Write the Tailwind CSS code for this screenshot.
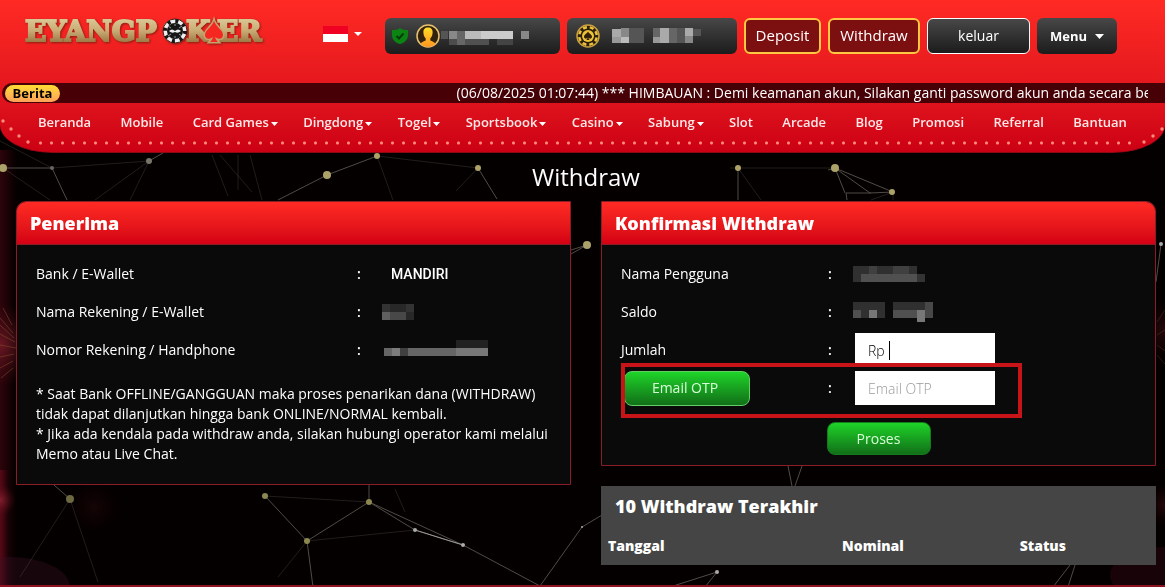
<!DOCTYPE html>
<html lang="id">
<head>
<meta charset="utf-8">
<meta name="viewport" content="width=device-width, initial-scale=1">
<title>Withdraw</title>
<script src="https://cdn.jsdelivr.net/npm/@tailwindcss/browser@4"></script>
</head>
<body class="relative flex min-h-screen flex-col overflow-x-hidden border-b-2 border-[#8c1420] bg-[#050000] font-['Open_Sans',sans-serif] text-sm text-white">

<!-- Background: constellation lines and red glow -->
<svg class="pointer-events-none absolute inset-0 h-full w-full" viewBox="0 0 1165 587" preserveAspectRatio="xMidYMin slice" aria-hidden="true">
  <defs>
    <linearGradient id="edgeL"><stop offset="0" stop-color="#6a0a1c"/><stop offset="1" stop-color="#6a0a1c" stop-opacity="0"/></linearGradient>
    <radialGradient id="glow"><stop offset="0" stop-color="#8c2430" stop-opacity=".8"/><stop offset="1" stop-color="#5a0c18" stop-opacity="0"/></radialGradient>
  </defs>
  <rect x="0" y="150" width="16" height="437" fill="url(#edgeL)" opacity=".4"/>
  <rect x="0" y="470" width="8" height="117" fill="url(#edgeL)" opacity=".7"/>
  <circle cx="0" cy="345" r="42" fill="url(#glow)" opacity=".8"/>
  <circle cx="0" cy="500" r="16" fill="url(#glow)"/>
  <circle cx="94" cy="507" r="24" fill="url(#glow)" opacity=".15"/>
  <ellipse cx="10" cy="587" rx="60" ry="30" fill="#3c1024" opacity=".35"/>
  <circle cx="1165" cy="505" r="20" fill="url(#glow)" opacity=".3"/>
  <circle cx="1165" cy="330" r="30" fill="url(#glow)" opacity=".3"/>
  <ellipse cx="1165" cy="575" rx="55" ry="28" fill="#3c0818" opacity=".35"/>
  <g stroke="#8c5030" stroke-width="1" opacity=".5">
    <path d="M0 318l13 15M0 325l14 13M0 334l15 8M0 345l16 3M0 357l14-3M0 368l13-7M3 308l9 17M1 378l12-10"/>
    <path d="M1157 322l8-12M1157 335l8-5M1157 345l8 6M1157 355l8 9" opacity=".6"/>
  </g>
  <g fill="none" stroke="#77756e" stroke-width="1" opacity=".65">
    <path d="M3 168H52L67 200M278 200L327 175L377 156M149 161L163 153M478 168L497 199M738 168V200M828 170L835 168L893 192M847 200L846 193H871M571 254L587 245L571 250M835 168L845 193M835 168L870 193L893 192"/>
    <path d="M54 485L70 499M265 496L307 541L369 502V485M369 502L415 530L463 545L369 502M307 541L313 587M582 527L602 515M582 527L540 586M717 572L705 587M717 572L670 587M1070 565L1053 587M1075 565L1068 587M788 466L792 486M802 466L795 486"/>
    <path d="M463 545L540 586M1161 244L1156 282"/>
  </g>
  <path d="M415 530L463 545" stroke="#999" fill="none"/>
  <g fill="none" stroke="#77756e" stroke-width="1" opacity=".25">
    <path d="M0 141L52 168L149 161L95 200M3 168L50 200M149 161L130 200M212 155L228 196M220 155L252 192M250 155L262 200M238 155V190M377 156L478 168L456 191M377 156L393 200M738 168L761 200M893 192L893 200M730 168L835 168M893 192L871 200"/>
    <path d="M70 499L20 577M70 499L98 582M265 496L369 502M307 541L278 577M307 541L415 530M395 489L405 512"/>
  </g>
  <g fill="#aaa268">
    <circle cx="3" cy="168" r="4"/><circle cx="327" cy="175" r="4"/><circle cx="377" cy="156" r="3"/><circle cx="478" cy="168" r="3"/><circle cx="587" cy="245" r="4"/><circle cx="738" cy="168" r="3"/><circle cx="835" cy="168" r="4"/><circle cx="892" cy="192" r="3"/><circle cx="149" cy="161" r="3" fill="#77746a"/>
  </g>
  <g fill="#8c8850">
    <circle cx="70" cy="499" r="4" fill="#6c6840"/><circle cx="265" cy="496" r="3"/><circle cx="369" cy="502" r="3"/><circle cx="307" cy="541" r="3"/>
  </g>
  <g fill="#aaa"><circle cx="415" cy="530" r="2"/><circle cx="463" cy="545" r="2"/><circle cx="582" cy="527" r="1"/><circle cx="717" cy="572" r="2"/><circle cx="1161" cy="244" r="2"/><circle cx="52" cy="168" r="2" fill="#666"/></g>
</svg>

<header class="relative overflow-hidden border-b border-[#8c0814] bg-linear-to-b from-[#ff2a24] via-[#e0141d] via-65% to-[#cc0014] [border-radius:0_0_52px_52px/0_0_28px_28px]">
  <div class="flex h-[83px] items-start pt-2 pr-12 pl-6">
    <a href="#" aria-label="Eyangpoker" class="block shrink-0">
      <svg class="overflow-visible drop-shadow-[1px_1px_1px_#8c1c10]" width="242" height="50" viewBox="0 -10 242 50">
        <defs>
          <linearGradient id="gold" gradientUnits="userSpaceOnUse" x1="0" y1="2" x2="0" y2="24"><stop offset="0" stop-color="#d8c692"/><stop offset=".5" stop-color="#c9aa74"/><stop offset="1" stop-color="#9c7a46"/></linearGradient>
        </defs>
        <g font-family="DejaVu Serif" font-weight="700" font-size="28" fill="url(#gold)" stroke="url(#gold)" stroke-width="2">
          <text x="1" y="23">EYANGP</text><text x="162" y="23">K</text><text x="193" y="23">ER</text>
        </g>
        <path d="M190 3C188 9 181 12 181 17c0 4 4 5 8 2-1 3-2 4-3 5h8c-1-1-2-2-3-5 4 3 8 2 8-2 0-5-7-8-9-14z" fill="#f52720" stroke="#c4a46e" stroke-width="3" paint-order="stroke"/>
        <circle cx="151" cy="13" r="12" fill="#eee" stroke="#4d2520"/>
        <circle cx="151" cy="13" r="8" fill="#161616"/>
        <circle cx="151" cy="13" r="10" fill="none" stroke="#161616" stroke-width="4" stroke-dasharray="3 4.854"/>
        <path d="M144 8l3 2M158 8l-3 2M144 18l3-2M158 18l-3-2M151 6v2M151 18v2" stroke="#999"/>
        <path d="M145 13q3-3 6 0q3-3 6 0q-3 3-6 1q-3 2-6-1z" fill="#eee"/>
      </svg>
    </a>
    <button type="button" aria-label="Bahasa Indonesia" class="mt-[18px] ml-auto flex shrink-0 items-center gap-1.5">
      <span class="block h-4 w-[25px] bg-linear-to-b from-[#f00022] from-50% to-white to-50%"></span>
      <svg width="8" height="4" viewBox="0 0 8 4"><path d="M0 0h8L4 4z" fill="#fff"/></svg>
    </button>
    <div class="mt-2.5 ml-[23px] flex shrink-0 gap-[7px]">
      <div class="flex h-9 w-[175px] items-center rounded-md bg-linear-to-b from-[#484848] to-[#1c1c1c] pl-[7px]">
        <svg width="16" height="16" viewBox="0 0 16 16" aria-hidden="true"><path d="M8 0C6 2 3 2 0 2v5c0 5 4 8 8 9 4-1 8-4 8-9V2c-3 0-6 0-8-2z" fill="#0c8414"/><path d="M4.500 8l2.500 2.500 4.500-5" fill="none" stroke="#063c0a" stroke-width="2"/></svg>
        <svg class="ml-2" width="24" height="24" viewBox="0 0 24 24" aria-hidden="true"><defs><linearGradient id="amber" x1="0" y1="0" x2="0" y2="1"><stop stop-color="#ffdc28"/><stop offset="1" stop-color="#ff9420"/></linearGradient></defs><circle cx="12" cy="12" r="11" fill="#30220c" stroke="#e8c070" stroke-width="1.500"/><path d="M12 3.500c-4 0-5 3-4.500 6 .3 3 1.500 4 2.200 5v2C7 17.500 5.500 18 4.500 20a11 11 0 0 0 15 0c-1-2-2.500-2.500-5.200-3.500v-2c.7-1 1.900-2 2.200-5 .5-3-.5-6-4.500-6z" fill="url(#amber)"/></svg>
        <svg class="ml-px" width="92" height="18" viewBox="0 0 92 18" aria-hidden="true"><path d="M0 4h7v8H0z" fill="#555"/><path d="M8 4h8v8H8z" fill="#888"/><path d="M16 4h8v8h-8z" fill="#666"/><path d="M8 12h8v6H8z" fill="#4c4c4c"/><path d="M16 12h8v6h-8z" fill="#666"/><path d="M24 12h24v6H24z" fill="#505050"/><path d="M24 4h16v8H24z" fill="#bbb"/><path d="M40 4h32v8H40z" fill="#ccc"/><path d="M56 12h16v6H56z" fill="#444"/><path d="M80 4h8v8h-8z" fill="#888"/></svg>
      </div>
      <div class="flex h-9 w-[170px] items-center rounded-md bg-linear-to-b from-[#484848] to-[#1c1c1c] pl-[9px]">
        <svg width="24" height="24" viewBox="0 0 24 24" aria-hidden="true"><circle cx="12" cy="12" r="11" fill="#2c200c" stroke="#cca040" stroke-width="1.500"/><circle cx="12" cy="12" r="8.800" fill="none" stroke="#ecc33a" stroke-width="2.500" stroke-dasharray="4 2.911" transform="rotate(10 12 12)"/><circle cx="12" cy="12" r="6" fill="#ecc33a"/><path d="M12 7.500c-1 2.200-4 3-4 5.300 0 2 2.300 2.400 3.500 1-.2 1.200-.6 1.700-1.200 2.200h3.400c-.6-.5-1-1-1.200-2.200 1.200 1.400 3.500 1 3.500-1 0-2.300-3-3.100-4-5.300z" fill="#332008"/></svg>
        <svg class="ml-3" width="90" height="18" viewBox="0 0 90 18" aria-hidden="true"><path d="M0 2h9v8H0z" fill="#aaa"/><path d="M0 10h9v6H0z" fill="#999"/><path d="M9 1h8v9H9z" fill="#888"/><path d="M9 10h8v6H9z" fill="#bbb"/><path d="M17 1h15v15H17z" fill="#555"/><path d="M41 1h7v9h-7z" fill="#666"/><path d="M41 10h7v6h-7z" fill="#999"/><path d="M48 1h9v15h-9z" fill="#aaa"/><path d="M57 1h8v15h-8z" fill="#666"/><path d="M65 1h8v15h-8z" fill="#555"/><path d="M73 1h8v8h-8z" fill="#aaa"/><path d="M73 9h8v7h-8z" fill="#888"/><path d="M81 2h8v7h-8z" fill="#555"/></svg>
      </div>
      <a href="#" class="flex h-9 w-[77px] items-center justify-center rounded-md border-2 border-[#ffc840] bg-[#7c1010] text-[15px]">Deposit</a>
      <a href="#" class="flex h-9 w-[92px] items-center justify-center rounded-md border-2 border-[#ffc840] bg-[#7c1010] text-[15px]">Withdraw</a>
      <button type="button" class="h-9 w-[103px] rounded-md border border-white bg-linear-to-b from-[#484848] to-[#1c1c1c] text-sm">keluar</button>
      <button type="button" class="flex h-9 w-20 items-center justify-center gap-2 rounded-md bg-linear-to-b from-[#484848] to-[#1c1c1c] text-[13px] font-bold">Menu <svg width="9" height="5" viewBox="0 0 9 5"><path d="M0 0h9L4.500 5z" fill="#fff"/></svg></button>
    </div>
  </div>

  <div class="ml-0.5 flex h-5 items-center rounded-l-full bg-[#460006] pr-[17px] pl-[3px]">
    <strong class="flex h-[17px] w-[55px] shrink-0 items-center justify-center rounded-full bg-linear-to-b from-[#ffdc30] to-[#ffa058] text-[13px] text-black">Berita</strong>
    <div class="min-w-0 flex-1 overflow-hidden pl-[34%] text-sm leading-5 whitespace-nowrap"><span class="ml-2">(06/08/2025 01:07:44) *** HIMBAUAN : Demi keamanan akun, Silakan ganti password akun anda secara berkala</span></div>
  </div>

  <nav class="h-[49px] px-[38px] pt-[7px]">
    <ul class="flex justify-between text-[13px] leading-6 font-semibold text-[#ffe8e8]">
      <li><a href="#">Beranda</a></li>
      <li><a href="#">Mobile</a></li>
      <li class="-mr-1"><a href="#" class="flex items-center gap-0.5">Card Games<svg class="mt-1" width="7" height="4" viewBox="0 0 7 4"><path d="M0 0h7L3.500 4z" fill="#fff"/></svg></a></li>
      <li class="-mr-1"><a href="#" class="flex items-center gap-0.5">Dingdong<svg class="mt-1" width="7" height="4" viewBox="0 0 7 4"><path d="M0 0h7L3.500 4z" fill="#fff"/></svg></a></li>
      <li class="-mr-1"><a href="#" class="flex items-center gap-0.5">Togel<svg class="mt-1" width="7" height="4" viewBox="0 0 7 4"><path d="M0 0h7L3.500 4z" fill="#fff"/></svg></a></li>
      <li class="-mr-1"><a href="#" class="flex items-center gap-0.5">Sportsbook<svg class="mt-1" width="7" height="4" viewBox="0 0 7 4"><path d="M0 0h7L3.500 4z" fill="#fff"/></svg></a></li>
      <li class="-mr-1"><a href="#" class="flex items-center gap-0.5">Casino<svg class="mt-1" width="7" height="4" viewBox="0 0 7 4"><path d="M0 0h7L3.500 4z" fill="#fff"/></svg></a></li>
      <li class="-mr-1"><a href="#" class="flex items-center gap-0.5">Sabung<svg class="mt-1" width="7" height="4" viewBox="0 0 7 4"><path d="M0 0h7L3.500 4z" fill="#fff"/></svg></a></li>
      <li><a href="#">Slot</a></li>
      <li><a href="#">Arcade</a></li>
      <li><a href="#">Blog</a></li>
      <li><a href="#">Promosi</a></li>
      <li><a href="#">Referral</a></li>
      <li><a href="#">Bantuan</a></li>
    </ul>
  </nav>
  <!-- Dotted trim along the lower edge -->
  <div class="pointer-events-none absolute inset-x-0 bottom-[7px] flex h-[28px] items-end" aria-hidden="true">
    <svg class="shrink-0" width="35" height="28" viewBox="0 0 35 28" fill="#ff8c78"><circle cx="3" cy="4" r="1.700"/><circle cx="11" cy="12" r="1.700"/><circle cx="19" cy="19" r="1.700"/><circle cx="28" cy="25" r="1.700"/></svg>
    <div class="h-1 flex-1 bg-[radial-gradient(circle,#ff8c78_1px,transparent_2px)] bg-[length:11px_4px] bg-repeat-x"></div>
    <svg class="shrink-0" width="28" height="28" viewBox="0 0 28 28" fill="#ff8c78"><circle cx="25" cy="12" r="1.700"/><circle cx="16" cy="19" r="1.700"/><circle cx="7" cy="25" r="1.700"/></svg>
  </div>
</header>

<main class="relative pr-[9px] pl-4">
  <h1 class="pt-2 pb-2 text-center text-2xl">Withdraw</h1>
  <div class="grid grid-cols-2 items-start gap-[30px]">

    <section class="overflow-hidden rounded-tl-[10px] border border-[#8c1c28] bg-[#0a0a0a] pb-5">
      <h2 class="border-b border-[#8c1c28] bg-linear-to-b from-[#ff2a24] to-[#d40014] px-[13px] text-lg leading-[42px] font-extrabold">Penerima</h2>
      <dl class="px-[19px] pt-2.5 leading-[38px]">
        <div class="flex items-center"><dt class="w-[321px]">Bank / E-Wallet</dt><dd class="flex items-center font-['Roboto'] text-sm font-medium"><span class="w-[34px] font-['Open_Sans'] font-semibold">:</span>MANDIRI</dd></div>
        <div class="flex items-center"><dt class="w-[321px]">Nama Rekening / E-Wallet</dt><dd class="flex items-center"><span class="w-[25px] font-semibold">:</span><svg width="32" height="16" viewBox="0 0 32 16" role="img" aria-label="Disamarkan"><path d="M0 0h32v16H0z" fill="#333"/><path d="M0 8h8v8H0z" fill="#606060"/><path d="M8 8h16v8H8z" fill="#484848"/><path d="M8 0h16v8H8zM24 8h8v8h-8z" fill="#282828"/></svg></dd></div>
        <div class="flex items-center"><dt class="w-[321px]">Nomor Rekening / Handphone</dt><dd class="flex items-center"><span class="w-[27px] font-semibold">:</span><svg class="mb-1" width="104" height="16" viewBox="0 0 104 16" role="img" aria-label="Disamarkan"><path d="M72 0h32v8H72z" fill="#222"/><path d="M0 8h104v8H0z" fill="#666"/><path d="M8 8h8v8H8z" fill="#7c7c7c"/><path d="M16 8h8v8h-8z" fill="#404040"/><path d="M72 8h32v8H72z" fill="#777"/></svg></dd></div>
      </dl>
      <div class="px-[19px] pt-[15px] leading-5">
        <p>* Saat Bank OFFLINE/GANGGUAN maka proses penarikan dana (WITHDRAW)<br>tidak dapat dilanjutkan hingga bank ONLINE/NORMAL kembali.</p>
        <p>* Jika ada kendala pada withdraw anda, silakan hubungi operator kami melalui<br>Memo atau Live Chat.</p>
      </div>
    </section>

    <div class="flex flex-col gap-5">
      <section class="overflow-hidden rounded-tr-[10px] border border-[#8c1c28] bg-[#0a0a0a] pb-2.5">
        <h2 class="border-b border-[#8c1c28] bg-linear-to-b from-[#ff2a24] to-[#d40014] px-[13px] text-lg leading-[42px] font-extrabold">Konfirmasi Withdraw</h2>
        <form class="px-[19px] pt-2.5" onsubmit="return false">
          <div class="flex h-[38px] items-center"><span class="w-[207px]">Nama Pengguna</span><span class="w-[25px] font-semibold">:</span><svg width="72" height="16" viewBox="0 0 72 16" role="img" aria-label="Disamarkan"><path d="M0 0h64v16H0z" fill="#303030"/><path d="M8 8h56v8H8z" fill="#505050"/><path d="M16 0h8v8h-8zM40 0h16v8H40z" fill="#404040"/><path d="M64 8h8v8h-8z" fill="#333"/></svg></div>
          <div class="flex h-[38px] items-center"><span class="w-[207px]">Saldo</span><span class="w-[25px] font-semibold">:</span><svg width="80" height="20" viewBox="0 0 80 20" role="img" aria-label="Disamarkan"><path d="M0 0h32v16H0zM40 0h40v16H40z" fill="#303030"/><path d="M0 8h8v8H0zM40 8h24v8H40z" fill="#505050"/><path d="M16 8h8v8h-8zM64 8h8v12h-8z" fill="#777"/><path d="M72 0h8v16h-8z" fill="#484848"/></svg></div>
          <div class="flex h-[38px] items-center"><label for="jumlah" class="w-[207px]">Jumlah</label><span class="w-[27px] font-semibold">:</span>
            <div class="relative"><input id="jumlah" type="text" value="Rp" class="block h-[34px] w-[140px] bg-white px-[13px] font-light text-black outline-none"><span class="absolute top-2 left-[34px] h-[19px] w-px bg-black"></span></div>
          </div>
          <div class="relative flex h-[38px] items-center">
            <div class="w-[207px] pl-[3px]"><button type="button" id="kirim" class="h-[35px] w-[126px] rounded-lg border border-[#64cc64] bg-linear-to-b from-[#1ed428] to-[#117018] pr-1 text-[#d8ffd8]">Email OTP</button></div><span class="w-[27px] font-semibold">:</span>
            <input type="text" aria-labelledby="kirim" placeholder="Email OTP" class="h-[34px] w-[140px] bg-white px-[13px] font-light text-black outline-none placeholder:text-[#999]">
            <!-- Highlight frame around the OTP step -->
            <div class="pointer-events-none absolute -top-1.5 left-0 h-[55px] w-[401px] border-4 border-[#c81418]"></div>
          </div>
          <div class="flex justify-center pt-[15px]"><button type="submit" class="h-[33px] w-[104px] rounded-lg border border-[#157c1c] bg-linear-to-b from-[#1ed428] to-[#117018] text-[#d8ffd8]">Proses</button></div>
        </form>
      </section>

      <section class="bg-[#444544]">
        <h2 class="px-3.5 text-lg leading-[41px] font-extrabold">10 Withdraw Terakhir</h2>
        <table class="w-full table-fixed text-left">
          <thead><tr class="h-[38px]"><th scope="col" class="w-[42%] pr-2 pl-[7px] font-extrabold">Tanggal</th><th scope="col" class="w-[32%] px-2 font-extrabold">Nominal</th><th scope="col" class="px-2 font-extrabold">Status</th></tr></thead>
          <tbody></tbody>
        </table>
      </section>
    </div>
  </div>
</main>
</body>
</html>
